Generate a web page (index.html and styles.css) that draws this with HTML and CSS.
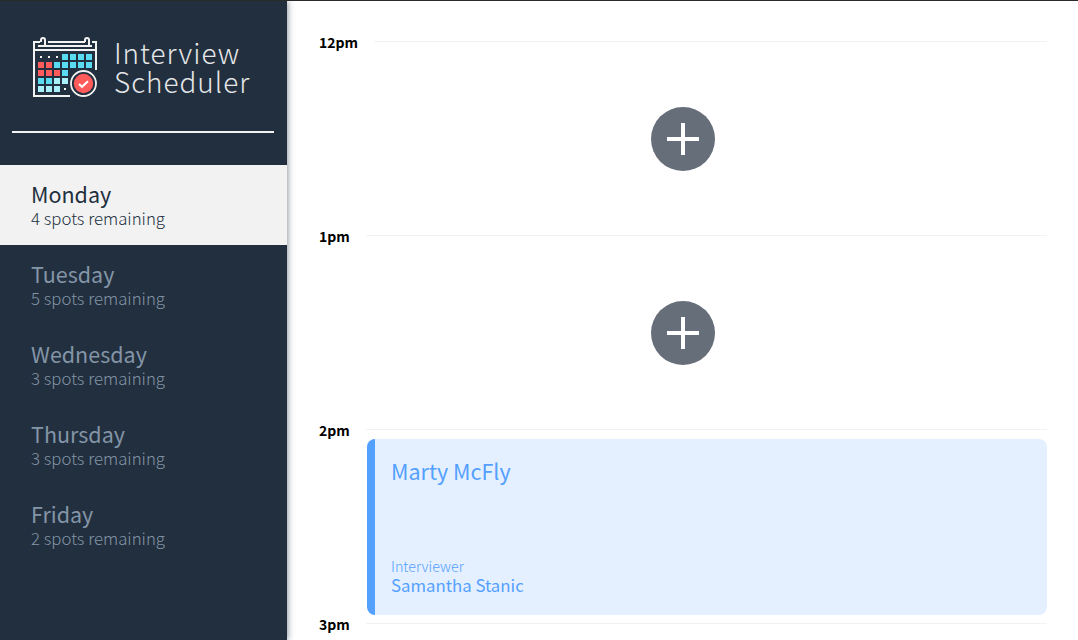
FILE: index.html
```html
<!DOCTYPE html>
<html lang="en">
<head>
<meta charset="utf-8">
<title>Interview Scheduler</title>
<link rel="stylesheet" href="styles.css">
</head>
<body>
<main class="layout">
  <section class="sidebar">
    <div class="logo">
      <svg class="logo-icon" width="66" height="62" viewBox="0 0 66 62">
        <g fill="none" stroke="#f2f2f2" stroke-width="2">
          <path d="M7 5H1V59H37M15 5H52M59 5H63V33M5 9H59M12 9V3Q12 1 10 1T8 3V5M56 9V3Q56 1 54 1T52 3V5M1 13H63"/>
        </g>
        <path fill="#f2f2f2" d="M7 19h2v2H7zM15 19h2v2h-2zM23 19h2v2h-2zM31 51h2v2h-2z"/>
        <path fill="#59dcf2" d="M29 17h6v6h-6zM37 17h6v6h-6zM45 17h6v6h-6zM53 17h6v6h-6zM21 25h6v6h-6zM29 25h6v6h-6zM37 25h6v6h-6zM45 25h6v6h-6zM53 25h6v6h-6zM29 33h6v6h-6zM5 41h6v6H5zM13 41h6v6h-6z"/>
        <path fill="#ff5b5b" d="M5 25h6v6H5zM13 25h6v6h-6zM5 33h6v6H5zM13 33h6v6h-6zM21 33h6v6h-6z"/>
        <path fill="#a8effa" d="M21 41h6v6h-6zM29 41h6v6h-6zM5 49h6v6H5zM13 49h6v6h-6zM21 49h6v6h-6z"/>
        <circle cx="50.500" cy="46.500" r="14" fill="#222f3e"/>
        <circle cx="50.500" cy="46.500" r="12.500" fill="none" stroke="#f2f2f2" stroke-width="1.800"/>
        <circle cx="50.500" cy="46.500" r="9.700" fill="#ff5b5b"/>
        <path d="M46 47l3 2.800 6-5.600" fill="none" stroke="#fff" stroke-width="2"/>
      </svg>
      <div class="logo-text">Interview<br>Scheduler</div>
    </div>
    <hr class="separator">
    <ul class="days">
      <li class="day day-selected"><h2 class="day-name">Monday</h2><p class="day-spots">4 spots remaining</p></li>
      <li class="day"><h2 class="day-name">Tuesday</h2><p class="day-spots">5 spots remaining</p></li>
      <li class="day"><h2 class="day-name">Wednesday</h2><p class="day-spots">3 spots remaining</p></li>
      <li class="day"><h2 class="day-name">Thursday</h2><p class="day-spots">3 spots remaining</p></li>
      <li class="day"><h2 class="day-name">Friday</h2><p class="day-spots">2 spots remaining</p></li>
    </ul>
  </section>
  <section class="schedule">
    <article class="slot">
      <header class="hour"><h4 class="time">12pm</h4><hr class="line"></header>
      <div class="empty"><svg class="add" width="64" height="64"><circle cx="32" cy="32" r="32" fill="#666e7a"/><path d="M16 32H48M32 16V48" stroke="#fff" stroke-width="4"/></svg></div>
    </article>
    <article class="slot">
      <header class="hour"><h4 class="time">1pm</h4><hr class="line"></header>
      <div class="empty"><svg class="add" width="64" height="64"><circle cx="32" cy="32" r="32" fill="#666e7a"/><path d="M16 32H48M32 16V48" stroke="#fff" stroke-width="4"/></svg></div>
    </article>
    <article class="slot">
      <header class="hour"><h4 class="time">2pm</h4><hr class="line"></header>
      <div class="card">
        <h2 class="student">Marty McFly</h2>
        <div><h4 class="label">Interviewer</h4><h3 class="interviewer">Samantha Stanic</h3></div>
      </div>
    </article>
    <article class="slot">
      <header class="hour"><h4 class="time">3pm</h4><hr class="line"></header>
    </article>
  </section>
</main>
</body>
</html>
```
FILE: styles.css
```css
* { box-sizing: border-box; margin: 0; padding: 0; }
body {
  height: 640px;
  overflow: hidden;
  background: #fff;
  border-top: 1px solid #2a2a2a;
  font-family: "Noto Sans CJK JP", "Noto Sans CJK SC", sans-serif;
}
.layout { display: flex; height: 639px; }
.sidebar {
  width: 287px;
  flex: none;
  background: #222f3e;
  box-shadow: 1px 0 6px rgba(34, 47, 62, 0.5);
}
.logo { display: flex; gap: 15px; height: 130px; padding: 36px 0 0 33px; }
.logo-icon { flex: none; }
.logo-text { padding-top: 1px; font-size: 27.9px; line-height: 29px; font-weight: 200; letter-spacing: 1px; color: #e4e6e8; white-space: nowrap; }
.separator { height: 2px; margin: 0 13px 32px 12px; border: 0; background: #f2f2f2; }
.days { list-style: none; }
.day { height: 80px; padding: 17px 31px 0; color: #8395a7; }
.day-selected { background: #f2f2f2; color: #222f3e; }
.day-name { font-size: 21.5px; line-height: 24px; font-weight: 400; }
.day-spots { font-size: 16.8px; line-height: 24px; font-weight: 200; }
.schedule { flex: 1; padding: 30px 31px 0 32px; overflow: hidden; }
.slot { height: 194px; }
.hour { display: flex; height: 24px; }
.time { margin-right: 16px; font-size: 14px; line-height: 22px; font-weight: 700; color: #000; }
.line { flex: 1; height: 1px; margin-top: 10px; border: 0; background: #f2f2f2; }
.empty { display: flex; justify-content: center; padding-top: 52px; }
.card {
  display: flex;
  flex-direction: column;
  justify-content: space-between;
  height: 176px;
  margin: -4px 0 0 48px;
  padding: 20px 16px 20px;
  border-left: 8px solid #54a0ff;
  border-radius: 8px;
  background: #e4f0ff;
  color: #54a0ff;
}
.student { font-size: 21.5px; line-height: 24px; font-weight: 400; }
.label { font-size: 14.3px; line-height: 19px; font-weight: 200; }
.interviewer { font-size: 16.8px; line-height: 20px; font-weight: 400; }
```
